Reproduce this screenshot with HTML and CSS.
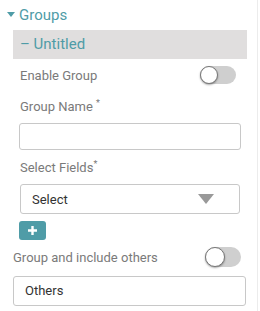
FILE: index.html
```html
<!DOCTYPE html>
<html lang="en">
<head>
  <meta charset="UTF-8">
  <meta name="viewport" content="width=device-width, initial-scale=1.0">
  <title>Groups</title>
  <link rel="stylesheet" href="styles.css">
</head>
<body>
  <div class="panel">
    <!-- Section header -->
    <div class="section-head">
      <span class="caret"></span>
      <span>Groups</span>
    </div>

    <div class="group-bar">&ndash; Untitled</div>

    <div class="group-body">
      <div class="row">
        <span class="label">Enable Group</span>
        <span class="toggle"><span class="knob"></span></span>
      </div>

      <div class="label field-label">Group Name <sup>*</sup></div>
      <input class="text-input" type="text">

      <div class="label field-label">Select Fields<sup>*</sup></div>
      <div class="select-box">
        <span>Select</span>
        <span class="select-arrow"></span>
      </div>

      <button class="add-btn">
        <svg width="11" height="11" viewBox="0 0 11 11">
          <path d="M5.5 1v9M1 5.5h9" stroke="#fff" stroke-width="2.4"/>
        </svg>
      </button>
    </div>

    <div class="others">
      <div class="row">
        <span class="label">Group and include others</span>
        <span class="toggle"><span class="knob"></span></span>
      </div>
      <div class="others-input">Others</div>
    </div>
  </div>
</body>
</html>
```

FILE: styles.css
```css
body {
  margin: 0;
  font-family: Roboto, "Liberation Sans", sans-serif;
  background: #fff;
}

.panel {
  width: 258px;
  height: 311px;
  border-right: 1px solid #ececec;
  box-sizing: border-box;
}

.section-head {
  display: flex;
  align-items: center;
  gap: 4px;
  height: 29px;
  padding-left: 7px;
  color: #4f9ca7;
  font-size: 15px;
}

.caret {
  width: 0;
  height: 0;
  border-left: 4.5px solid transparent;
  border-right: 4.5px solid transparent;
  border-top: 5px solid #4f9ca7;
}

.group-bar {
  margin: 1px 10px 0 13px;
  height: 29px;
  line-height: 29px;
  padding-left: 7px;
  background: #e0dede;
  color: #4f9ca7;
  font-size: 15px;
}

.group-body {
  padding: 0 17px 0 19px;
}

.row {
  display: flex;
  align-items: center;
  justify-content: space-between;
}

.group-body .row {
  height: 28px;
  margin-top: 2px;
  padding-left: 1px;
  padding-right: 4px;
}

.label {
  font-size: 13px;
  color: #7a7a7a;
}

.label sup {
  font-size: 9px;
  vertical-align: 5px;
}

.field-label {
  padding-left: 1px;
  margin-top: 9px;
  height: 25px;
}

.toggle {
  position: relative;
  width: 36px;
  height: 18px;
  border-radius: 9px;
  background: #cfcfcf;
}

.knob {
  position: absolute;
  left: 0;
  top: 0;
  width: 16px;
  height: 16px;
  border-radius: 50%;
  background: #fff;
  border: 1px solid #777;
  box-shadow: 0 1px 2px rgba(0, 0, 0, 0.35);
}

.text-input {
  display: block;
  width: 222px;
  height: 27px;
  box-sizing: border-box;
  border: 1px solid #c8c8c8;
  border-radius: 3px;
  margin: 0 0 8px 0;
}

.select-box {
  display: flex;
  align-items: center;
  justify-content: space-between;
  width: 220px;
  height: 30px;
  box-sizing: border-box;
  margin-left: 1px;
  padding: 0 25px 0 11px;
  border: 1px solid #c8c8c8;
  border-radius: 3px;
  font-size: 13px;
  color: #333;
}

.select-arrow {
  width: 0;
  height: 0;
  border-left: 8px solid transparent;
  border-right: 8px solid transparent;
  border-top: 10px solid #999;
}

.add-btn {
  display: flex;
  align-items: center;
  justify-content: center;
  width: 27px;
  height: 19px;
  margin-top: 7px;
  padding: 0;
  border: none;
  border-radius: 3px;
  background: #4f9ca7;
}

.others {
  padding: 0 11px 0 13px;
}

.others .row {
  height: 26px;
  margin-top: 4px;
  padding-right: 5px;
}

.others .toggle {
  height: 20px;
  border-radius: 10px;
}

.others .knob {
  width: 18px;
  height: 18px;
}

.others-input {
  margin-top: 6px;
  height: 30px;
  line-height: 28px;
  box-sizing: border-box;
  padding-left: 11px;
  border: 1px solid #c8c8c8;
  border-radius: 3px;
  font-size: 13px;
  color: #333;
}
```
